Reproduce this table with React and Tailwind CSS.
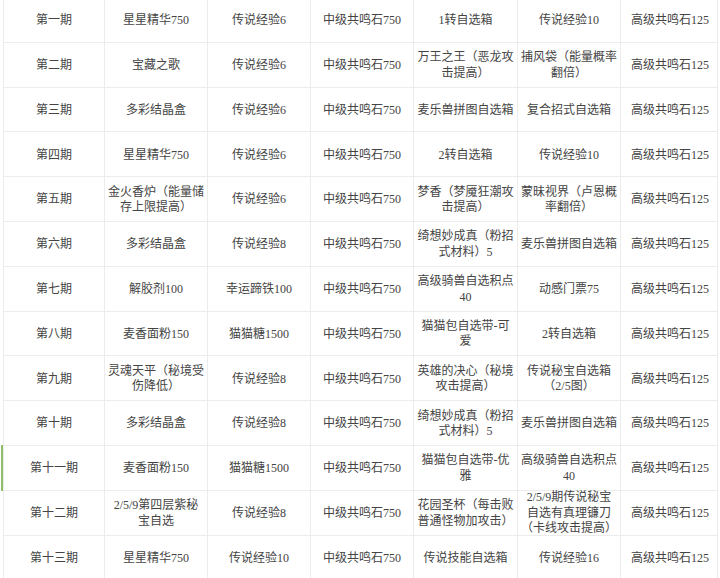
const rows = [
  ['第一期', '星星精华750', '传说经验6', '中级共鸣石750', '1转自选箱', '传说经验10', '高级共鸣石125'],
  ['第二期', '宝藏之歌', '传说经验6', '中级共鸣石750', '万王之王（恶龙攻\n击提高）', '捕风袋（能量概率\n翻倍）', '高级共鸣石125'],
  ['第三期', '多彩结晶盒', '传说经验6', '中级共鸣石750', '麦乐兽拼图自选箱', '复合招式自选箱', '高级共鸣石125'],
  ['第四期', '星星精华750', '传说经验6', '中级共鸣石750', '2转自选箱', '传说经验10', '高级共鸣石125'],
  ['第五期', '金火香炉（能量储\n存上限提高）', '传说经验6', '中级共鸣石750', '梦香（梦魇狂潮攻\n击提高）', '蒙昧视界（卢恩概\n率翻倍）', '高级共鸣石125'],
  ['第六期', '多彩结晶盒', '传说经验8', '中级共鸣石750', '绮想妙成真（粉招\n式材料）5', '麦乐兽拼图自选箱', '高级共鸣石125'],
  ['第七期', '解胶剂100', '幸运蹄铁100', '中级共鸣石750', '高级骑兽自选积点\n40', '动感门票75', '高级共鸣石125'],
  ['第八期', '麦香面粉150', '猫猫糖1500', '中级共鸣石750', '猫猫包自选带-可\n爱', '2转自选箱', '高级共鸣石125'],
  ['第九期', '灵魂天平（秘境受\n伤降低）', '传说经验8', '中级共鸣石750', '英雄的决心（秘境\n攻击提高）', '传说秘宝自选箱\n（2/5图）', '高级共鸣石125'],
  ['第十期', '多彩结晶盒', '传说经验8', '中级共鸣石750', '绮想妙成真（粉招\n式材料）5', '麦乐兽拼图自选箱', '高级共鸣石125'],
  ['第十一期', '麦香面粉150', '猫猫糖1500', '中级共鸣石750', '猫猫包自选带-优\n雅', '高级骑兽自选积点\n40', '高级共鸣石125'],
  ['第十二期', '2/5/9第四层紫秘\n宝自选', '传说经验8', '中级共鸣石750', '花园圣杯（每击败\n普通怪物加攻击）', '2/5/9期传说秘宝\n自选有真理镰刀\n（卡线攻击提高）', '高级共鸣石125'],
  ['第十三期', '星星精华750', '传说经验10', '中级共鸣石750', '传说技能自选箱', '传说经验16', '高级共鸣石125'],
]

const widths = ['w-[101px]', 'w-[103px]', 'w-[103px]', 'w-[103px]', 'w-[104px]', 'w-[103px]', 'w-[98px]']

export default function App() {
  return (
    <div
      className="relative h-[578px] w-[720px] overflow-hidden bg-white text-[12px] leading-[15.5px] text-[#444]"
      style={{ fontFamily: '"Liberation Serif", "Noto Sans CJK SC", serif' }}
    >
      <div className="absolute left-[1px] top-[445px] h-[46px] w-[2px] bg-[#8fbf6a]" />
      <div className="-mt-[2px] ml-[3px] w-[715px] border-x border-[#ececec]">
        {rows.map((row, i) => (
          <div key={i} className="flex h-[44.8px] border-b border-[#ececec]">
            {row.map((cell, j) => (
              <div
                key={j}
                className={`${widths[j]} flex shrink-0 items-center justify-center whitespace-nowrap pt-[2px] text-center ${
                  j < 6 ? 'border-r border-[#ececec]' : ''
                }`}
              >
                <span>
                  {cell.split('\n').map((line, k) => (
                    <span key={k} className="block">{line}</span>
                  ))}
                </span>
              </div>
            ))}
          </div>
        ))}
      </div>
    </div>
  )
}
